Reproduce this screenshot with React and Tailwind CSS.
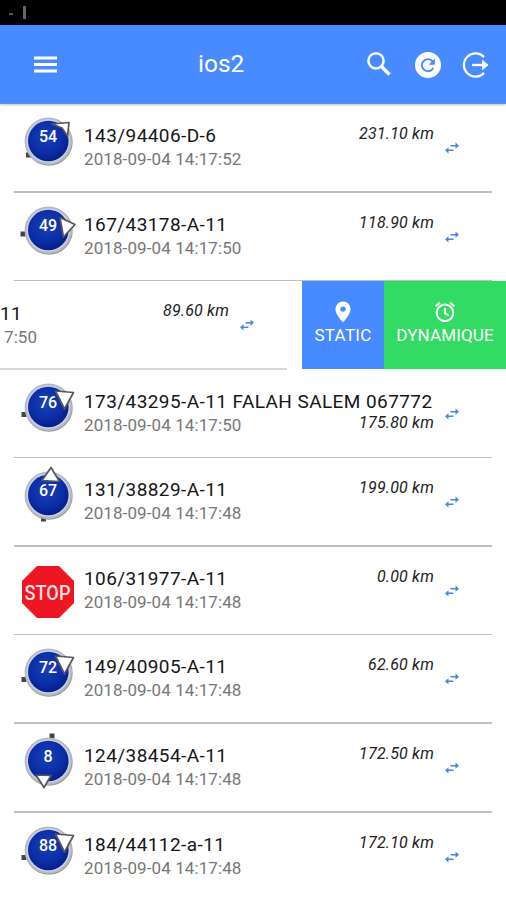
import React from "react";

const EAST = { arrow: "7.5,-16 25.5,-14.5 16.5,2", tail: [-24, 7.5] };

const vehicles = [
  { speed: "54", name: "143/94406-D-6", date: "2018-09-04 14:17:52", km: "231.10 km", arrow: "4,-17 21,-18.5 19.5,-5 14,-13", tail: [-19.5, 14] },
  { speed: "49", name: "167/43178-A-11", date: "2018-09-04 14:17:50", km: "118.90 km", arrow: "12,-12.5 27,-5.5 15.5,7", tail: [-25, 4] },
  { name: "11", date: "7:50", km: "89.60 km", open: true },
  { speed: "76", name: "173/43295-A-11 FALAH SALEM 067772", date: "2018-09-04 14:17:50", km: "175.80 km", low: true, ...EAST },
  { speed: "67", name: "131/38829-A-11", date: "2018-09-04 14:17:48", km: "199.00 km", arrow: "-6,-14.5 3,-27.5 11.5,-13.5", tail: [-4.5, 24] },
  { stop: true, name: "106/31977-A-11", date: "2018-09-04 14:17:48", km: "0.00 km" },
  { speed: "72", name: "149/40905-A-11", date: "2018-09-04 14:17:48", km: "62.60 km", ...EAST },
  { speed: "8", name: "124/38454-A-11", date: "2018-09-04 14:17:48", km: "172.50 km", arrow: "-12,14 3,14.5 -4,26.5", tail: [4, -25] },
  { speed: "88", name: "184/44112-a-11", date: "2018-09-04 14:17:48", km: "172.10 km", ...EAST },
];

function Marker({ v }) {
  if (v.stop) {
    return (
      <svg className="mt-[15px] size-[60px]" viewBox="-30 -30 60 60">
        <polygon points="-11,-26 11,-26 26,-11 26,11 11,26 -11,26 -26,11 -26,-11" fill="#ee1620" />
        <text x="-0.5" y="7.5" textAnchor="middle" textLength="46" lengthAdjust="spacingAndGlyphs" fill="#ffdfe0" className="font-[Roboto] text-[20px] font-medium">STOP</text>
      </svg>
    );
  }
  return (
    <svg className="mt-[7px] size-[60px]" viewBox="-30 -30 60 60">
      <defs>
        <radialGradient id="ball" cx="0.45" cy="0.4" r="0.6">
          <stop offset="0" stopColor="#1a40b8" />
          <stop offset="0.7" stopColor="#0b2ca5" />
          <stop offset="1" stopColor="#071f86" />
        </radialGradient>
      </defs>
      <rect x={v.tail[0] - 2.5} y={v.tail[1] - 2.5} width="5" height="5" fill="#444" />
      <circle cx="0.9" cy="0.9" r="23.8" fill="#999" />
      <circle cx="0.3" cy="0.2" r="23.7" fill="#b9b9b6" />
      <circle cx="0.3" r="21.8" fill="#c6d0f2" />
      <circle cx="0.3" r="20.3" fill="url(#ball)" />
      <polygon points={v.arrow} fill="#fff" stroke="#54575c" strokeWidth="1.7" strokeLinejoin="round" />
      <text x="0" y="1.3" textAnchor="middle" fill="#fff" className="font-[Roboto] text-[16px] font-medium">{v.speed}</text>
    </svg>
  );
}

function SwapIcon() {
  return (
    <svg className="h-[12px] w-[16px]" viewBox="0 0 16 12" fill="#4a86e0">
      <path d="M6.500 2.900h5V.6L15 3.700l-3.500 3.100V4.500h-5z" />
      <path d="M9.500 7.500h-5V5.200L1 8.300l3.500 3.100V9.100h5z" />
    </svg>
  );
}

function Details({ v }) {
  return (
    <>
      <div className={"w-0 flex-1 whitespace-nowrap " + (v.open ? "pt-[21px]" : "pt-[20px]")}>
        <div className="text-[19px] leading-[23px] tracking-[0.420px] text-[#161616]">{v.name}</div>
        <div className={"text-[17px] leading-6 tracking-[0.1px] text-[#777] " + (v.open ? "pl-[4px]" : "")}>{v.date}</div>
      </div>
      <div className={"pr-[10px] text-[16px] italic leading-5 tracking-[0.2px] text-[#222] " + (v.low ? "pt-[43px]" : "pt-[20px]")}>{v.km}</div>
      <div className="pt-[38px]"><SwapIcon /></div>
    </>
  );
}

function SwipedRow({ v }) {
  return (
    <div className="flex h-[88.570px]">
      <div className="flex w-[302px] shrink-0 flex-col">
        <div className="flex min-h-0 flex-1 pr-[47px]"><Details v={v} /></div>
        <div className="h-[2px] w-[287px] shrink-0 bg-[#d8d8d8]" />
      </div>
      <div className="flex h-[87.500px] w-[82px] shrink-0 flex-col items-center bg-[#488aff] pt-[19px] text-white">
        <svg className="size-6" viewBox="0 0 24 24" fill="currentColor">
          <path d="M12 1.500a7.600 7.600 0 0 0-7.600 7.600C4.400 14.800 12 22.500 12 22.500s7.600-7.700 7.600-13.400A7.600 7.600 0 0 0 12 1.500zm0 10.300a2.700 2.700 0 1 1 0-5.400 2.700 2.700 0 0 1 0 5.400z" />
        </svg>
        <span className="text-[17px] leading-[22px] tracking-[0.3px]">STATIC</span>
      </div>
      <div className="flex h-[87.500px] flex-1 flex-col items-center bg-[#32db64] pt-[19px] text-white">
        <svg className="size-6" viewBox="0 0 24 24" fill="none" stroke="currentColor" strokeWidth="2">
          <circle cx="12" cy="12.800" r="8.300" />
          <path d="M12 8v5.200l3.800 2.400M2.600 6.300 7 2.600M21.400 6.300 17 2.600" />
        </svg>
        <span className="text-[17px] leading-[22px] tracking-[0.15px]">DYNAMIQUE</span>
      </div>
    </div>
  );
}

function Row({ v, last }) {
  return (
    <div className="flex h-[88.570px] flex-col">
      <div className="flex min-h-0 flex-1 pl-[18px] pr-[46px]">
        <div className="w-[66px] shrink-0"><Marker v={v} /></div>
        <Details v={v} />
      </div>
      {!last && <div className="mx-[14px] h-[1.500px] shrink-0 bg-[#c0c0c0]" />}
    </div>
  );
}

export default function App() {
  return (
    <div className="h-[900px] w-[506px] overflow-hidden bg-white font-[Roboto,sans-serif]">
      <div className="flex h-[25px] items-center bg-black pl-[9px]">
        <span className="mt-[2px] h-[2px] w-[4px] bg-[#555]" />
        <span className="ml-[10px] h-[13px] w-[3px] bg-[#666]" />
      </div>
      <header className="flex h-[79px] items-center border-b border-[#5e8fd8] bg-[#488aff] pl-[34px] pr-[16px] text-white shadow-[0_1px_2px_rgba(0,0,0,0.25)]">
        <svg className="mt-[1px] h-[17px] w-[23px]" viewBox="0 0 23 17" fill="currentColor">
          <path d="M0 .5h23v3H0zM0 7h23v3H0zM0 13.500h23v3H0z" />
        </svg>
        <h1 className="ml-[141px] flex-1 text-[24.500px] leading-8">ios2</h1>
        <svg className="size-[26px]" viewBox="0 0 26 26" fill="none" stroke="currentColor">
          <circle cx="10" cy="9.800" r="7.600" strokeWidth="2.500" />
          <path d="m15.500 15.500 8 8" strokeWidth="3.600" />
        </svg>
        <svg className="ml-[22px] mt-[1px] size-[28px]" viewBox="0 0 28 28">
          <circle cx="14" cy="14" r="13" fill="white" />
          <path d="M18.600 10.400A6 6 0 1 0 19.300 16.800" fill="none" stroke="#488aff" strokeWidth="1.900" />
          <path d="M20.800 7.500v6.200h-6.200z" fill="#488aff" />
        </svg>
        <svg className="ml-[20px] mt-[1px] size-[28px]" viewBox="0 0 28 28" fill="none" stroke="currentColor" strokeWidth="2.300">
          <path d="M22 6.100A11.600 11.600 0 1 0 22 21.900" />
          <path d="M10 14h11" strokeWidth="2.400" />
          <path d="m20.500 9.300 5.500 4.700-5.500 4.700z" fill="currentColor" strokeWidth="0.800" />
        </svg>
      </header>
      <main>
        {vehicles.map((v, i) =>
          v.open ? <SwipedRow key={v.name} v={v} /> : <Row key={v.name} v={v} last={i === vehicles.length - 1} />
        )}
      </main>
    </div>
  );
}
